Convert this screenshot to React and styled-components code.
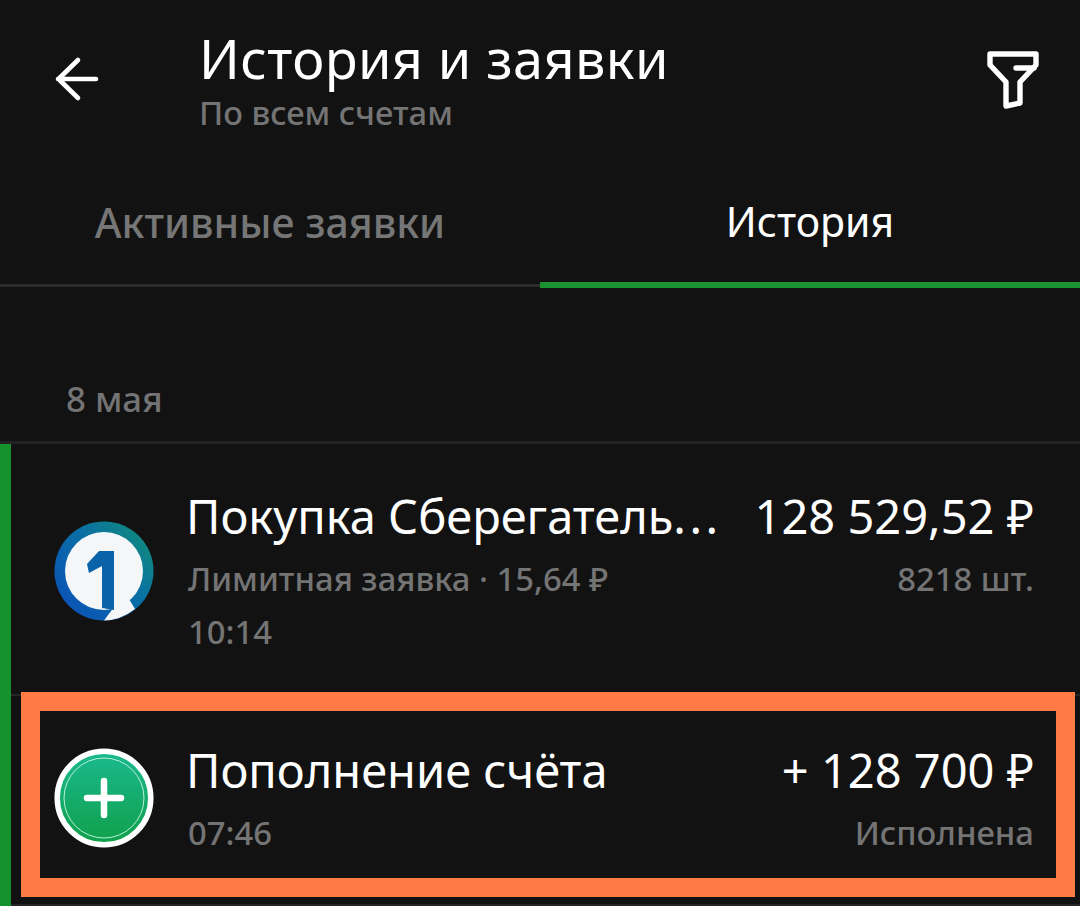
import React from 'react'
import styled, { createGlobalStyle } from 'styled-components'

const GlobalStyle = createGlobalStyle`
  html, body {
    margin: 0;
    padding: 0;
    background: #121212;
  }
  * {
    box-sizing: border-box;
  }
`

const BackIcon = () => (
  <svg width="48" height="48" viewBox="0 0 48 48" fill="none" stroke="#fff" strokeWidth="4.6" strokeLinecap="round" strokeLinejoin="round">
    <path d="M42 24H4M24 5 4.500 24 24 43" />
  </svg>
)

const FilterIcon = () => (
  <svg width="54" height="60" viewBox="0 0 54 60" fill="none" stroke="#fff" strokeWidth="5.4" strokeLinecap="round" strokeLinejoin="round">
    <path d="M3 4H49V15L33 32V53L19 56V32L3 15Z" />
    <path d="M29 18H47" />
  </svg>
)

const BrokerLogo = () => (
  <svg width="100" height="100" viewBox="0 0 100 100">
    <defs>
      <linearGradient id="ring" x1="0.1" y1="0.8" x2="0.9" y2="0.1">
        <stop offset="0" stopColor="#0b55b5" />
        <stop offset="0.55" stopColor="#0a6fa5" />
        <stop offset="1" stopColor="#0f8a7d" />
      </linearGradient>
    </defs>
    <circle cx="50" cy="50" r="49.500" fill="url(#ring)" />
    <circle cx="50" cy="50" r="39" fill="#f4f6f8" />
    <path d="M50 99.500 60 86 75 78 81 88Q66 99.500 50 99.500Z" fill="#f4f6f8" />
    <path d="M33 43 45 30H60V89L48 87V45L35 52Z" fill="#0a62a8" />
  </svg>
)

const PlusBadge = () => (
  <svg width="100" height="100" viewBox="0 0 100 100">
    <defs>
      <linearGradient id="plusFill" x1="0" y1="0" x2="0" y2="1">
        <stop offset="0" stopColor="#1ab98f" />
        <stop offset="1" stopColor="#10a04a" />
      </linearGradient>
    </defs>
    <circle cx="50" cy="50" r="46.800" fill="url(#plusFill)" stroke="#fff" strokeWidth="5.500" />
    <circle cx="50" cy="50" r="40" fill="none" stroke="#b8f0d8" strokeWidth="1" />
    <path d="M50 33V67M33 50H67" stroke="#fff" strokeWidth="6.500" strokeLinecap="round" />
  </svg>
)

const App = () => {
  return (
    <Page>
      <GlobalStyle />
      <Header>
        <BackButton>
          <BackIcon />
        </BackButton>
        <Titles>
          <Title>История и заявки</Title>
          <Subtitle>По всем счетам</Subtitle>
        </Titles>
        <FilterButton>
          <FilterIcon />
        </FilterButton>
      </Header>

      <Tabs>
        <Tab>Активные заявки</Tab>
        <Tab $active>История</Tab>
      </Tabs>

      <DateLabel>8 мая</DateLabel>

      <List>
        <Row $height={252} $pad={47}>
          <RowIcon $top={30}>
            <BrokerLogo />
          </RowIcon>
          <RowBody>
            <TopLine>
              <RowTitle>Покупка Сберегатель<Dots>...</Dots></RowTitle>
              <Amount>128 529,52 ₽</Amount>
            </TopLine>
            <MetaLine>
              <Meta>Лимитная заявка · 15,64 ₽</Meta>
              <Meta>8218 шт.</Meta>
            </MetaLine>
            <MetaLine>
              <Meta>10:14</Meta>
            </MetaLine>
          </RowBody>
        </Row>
        <Row $height={210} $pad={49}>
          <RowIcon $top={3}>
            <PlusBadge />
          </RowIcon>
          <RowBody>
            <TopLine>
              <RowTitle>Пополнение счёта</RowTitle>
              <Amount>+ 128 700 ₽</Amount>
            </TopLine>
            <MetaLine>
              <Meta>07:46</Meta>
              <Meta>Исполнена</Meta>
            </MetaLine>
          </RowBody>
          <Highlight />
        </Row>
      </List>
    </Page>
  )
}

const Page = styled.div`
  width: 1080px;
  height: 906px;
  overflow: hidden;
  background: #121212;
  color: #fff;
  font-family: "Noto Sans", "Open Sans", sans-serif;
`

const Header = styled.header`
  display: flex;
  align-items: flex-start;
  height: 180px;
  padding: 28px 0 0 54px;
`

const BackButton = styled.div`
  width: 145px;
  padding-top: 27px;
  flex-shrink: 0;
`

const Titles = styled.div`
  flex: 1;
  display: flex;
  flex-direction: column;
`

const Title = styled.h1`
  margin: 0;
  font-size: 54px;
  line-height: 60px;
  font-weight: 400;
  letter-spacing: 0.4px;
`

const Subtitle = styled.div`
  margin-top: 4px;
  font-size: 32.700px;
  line-height: 42px;
  font-weight: 500;
  color: #747474;
`

const FilterButton = styled.div`
  width: 93px;
  padding-top: 22px;
  flex-shrink: 0;
`

const Tabs = styled.div`
  display: grid;
  grid-template-columns: 540px 540px;
  height: 108px;
`

const Tab = styled.div`
  display: flex;
  align-items: center;
  justify-content: center;
  padding-bottom: 21px;
  font-size: 41px;
  font-weight: ${(props) => (props.$active ? 400 : 500)};
  color: ${(props) => (props.$active ? '#fff' : '#767676')};
  border-bottom: ${(props) => (props.$active ? '6px solid #1a9330' : '3px solid #2c2c2c')};
  height: ${(props) => (props.$active ? '108px' : '107px')};
`

const DateLabel = styled.div`
  height: 156px;
  padding: 89px 0 0 66px;
  font-size: 34.800px;
  line-height: 44px;
  font-weight: 500;
  color: #747474;
  border-bottom: 3px solid #222;
`

const List = styled.div`
  border-left: 11px solid #15922b;
`

const Row = styled.div`
  position: relative;
  display: flex;
  height: ${(props) => props.$height}px;
  padding: ${(props) => props.$pad}px 46px 0 43px;
  border-bottom: 2px solid #262626;
`

const RowIcon = styled.div`
  width: 134px;
  padding-top: ${(props) => props.$top}px;
  flex-shrink: 0;
`

const RowBody = styled.div`
  flex: 1;
  min-width: 0;
`

const TopLine = styled.div`
  display: flex;
  justify-content: space-between;
  align-items: baseline;
  height: 56px;
  font-size: 47px;
  line-height: 50px;
`

const RowTitle = styled.span`
  margin-left: -2px;
  white-space: nowrap;
`

const Dots = styled.span`
  letter-spacing: 3.500px;
`

const Amount = styled.span`
  white-space: nowrap;
`

const MetaLine = styled.div`
  display: flex;
  justify-content: space-between;
  margin-top: 11px;
`

const Meta = styled.span`
  font-size: 32.800px;
  line-height: 42px;
  font-weight: 500;
  color: #747474;
  white-space: nowrap;
`

const Highlight = styled.div`
  position: absolute;
  left: 10px;
  top: -4px;
  width: 1054px;
  height: 205px;
  border: 19px solid #ff7a45;
  pointer-events: none;
`

export default App
